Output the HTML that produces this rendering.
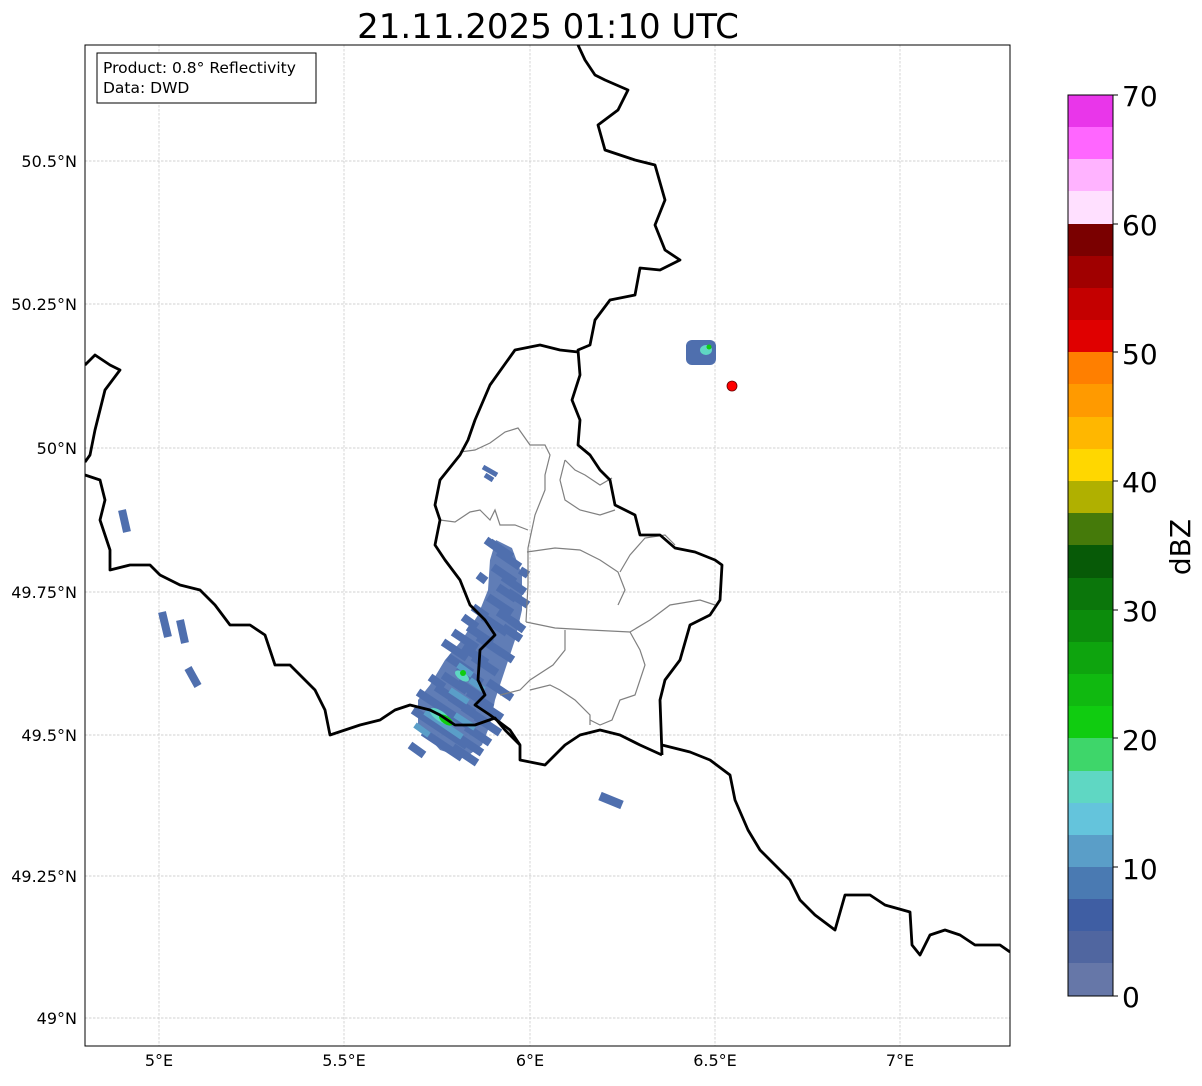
<!DOCTYPE html>
<html><head><meta charset="utf-8"><style>
body{margin:0;background:#fff;width:1202px;height:1081px;overflow:hidden;font-family:"Liberation Sans","DejaVu Sans",sans-serif}
</style></head><body>
<svg width="1202" height="1081" xmlns="http://www.w3.org/2000/svg" font-family="DejaVu Sans, Liberation Sans, sans-serif">
<rect width="1202" height="1081" fill="#fff"/>
<text x="548" y="38" font-size="34" text-anchor="middle" fill="#000">21.11.2025 01:10 UTC</text>
<defs><clipPath id="c"><rect x="85" y="45" width="925" height="1001"/></clipPath></defs>
<g stroke="#c4c4c4" stroke-width="0.7" stroke-dasharray="2.5,1.5">
<line x1="159" y1="45" x2="159" y2="1046"/><line x1="344" y1="45" x2="344" y2="1046"/><line x1="530" y1="45" x2="530" y2="1046"/><line x1="715" y1="45" x2="715" y2="1046"/><line x1="900" y1="45" x2="900" y2="1046"/>
<line x1="85" y1="161" x2="1010" y2="161"/><line x1="85" y1="304" x2="1010" y2="304"/><line x1="85" y1="448" x2="1010" y2="448"/><line x1="85" y1="592" x2="1010" y2="592"/><line x1="85" y1="735" x2="1010" y2="735"/><line x1="85" y1="876" x2="1010" y2="876"/><line x1="85" y1="1018" x2="1010" y2="1018"/>
</g>
<g clip-path="url(#c)">
<!-- radar echo underlay -->
<polygon points="418,725 440,750 465,758 482,745 490,725 495,700 505,670 515,640 522,610 522,575 512,548 496,540 490,560 488,590 478,615 462,640 445,660 430,685 418,700" fill="#4f6fae" opacity="0.9"/>
<g stroke="#4f6fae" stroke-width="8" fill="none">
<path d="M418,692l24,16 M433,702l24,16 M448,712l24,16 M413,710l24,16 M428,720l24,16 M443,730l24,16 M458,737l24,16 M423,732l24,16 M438,742l24,16 M453,747l24,16 M466,727l24,16 M436,687l24,16 M450,697l24,16 M463,707l24,16 M476,717l24,16 M458,682l24,16 M443,675l24,16 M468,692l24,16 M478,702l24,16 M488,682l24,16 M410,745l14,10 M430,677l14,10"/>
<path d="M448,657l24,16 M463,647l24,16 M458,667l24,16 M473,657l24,16 M443,642l24,16 M478,637l24,16 M468,627l24,16 M483,617l24,16 M493,647l20,13 M453,632l24,16 M488,597l24,16 M498,612l20,13 M503,627l18,12 M463,617l14,10 M473,607l14,10"/>
<path d="M490,542l22,15 M498,552l22,15 M493,567l22,15 M503,577l22,15 M508,592l20,13 M498,587l18,12 M486,540l14,10 M510,620l14,10 M478,575l8,6 M520,570l8,5"/>
<path d="M483,467l14,8 M485,475l8,5" stroke-width="5"/>
<path d="M162,612l6,25 M180,620l5,23 M188,668l10,18 M122,510l5,22" stroke-width="8"/>
<path d="M600,796l22,9" stroke-width="9"/>
</g>
<rect x="686" y="340" width="30" height="25" rx="6" fill="#4f6fae"/>
<g stroke="#5a9ec8" stroke-width="6" fill="none">
<path d="M425,712l24,16 M440,722l22,15 M455,715l20,13 M450,690l18,12 M458,665l14,10 M470,680l14,10 M415,725l14,10"/>
</g>
<g fill="#5fd7c3"><ellipse cx="440" cy="716" rx="12" ry="5" transform="rotate(35 440 716)"/><ellipse cx="462" cy="676" rx="8" ry="4" transform="rotate(35 462 676)"/><ellipse cx="706" cy="350" rx="6" ry="5"/></g>
<g fill="#10cc10"><ellipse cx="446" cy="720" rx="8" ry="4" transform="rotate(35 446 720)"/><circle cx="463" cy="673" r="3"/><circle cx="709" cy="347" r="2.5"/></g>
<!-- grey internal borders -->
<g fill="none" stroke="#808080" stroke-width="1.2">
<polyline points="460,452 475,450 490,443 505,432 518,428 530,445 545,445 550,455 545,475 545,490 535,515 528,548 528,585 526,622"/>
<polyline points="440,520 455,522 470,512 480,510 490,520 495,510 500,525 515,525 528,530"/>
<polyline points="527,552 555,548 580,550 600,560 618,572 625,590 618,605"/>
<polyline points="620,572 630,555 645,538 665,535 675,545"/>
<polyline points="526,622 555,628 590,630 630,632 650,620 670,605 700,600 715,605"/>
<polyline points="565,630 565,650 553,665 530,680 520,690 500,695"/>
<polyline points="630,632 640,650 645,665 640,680 635,695 620,700 612,720 600,725 590,720"/>
<polyline points="530,690 550,685 560,690 575,700 590,715 590,725"/>
<polyline points="565,460 560,480 565,500 580,510 600,515 615,510"/>
<polyline points="565,460 575,470 585,475 600,485 612,478"/>
</g>
<!-- black borders -->
<g fill="none" stroke="#000" stroke-width="2.8" stroke-linejoin="round">
<polyline points="578,45 585,60 595,75 605,80 628,90 618,110 598,125 605,150 635,160 655,165 665,200 655,225 665,250 680,260 660,270 640,268 635,295 610,300 595,320 590,345 578,350 580,375 572,400 580,420 578,445 590,455 600,470 610,480 615,505 635,515 640,535 660,535 675,548 695,552 715,560 722,565 720,600 710,615 700,620 690,625 680,660 665,680 660,700 662,755"/>
<polyline points="662,745 690,752 710,760 730,775 735,800 748,830 760,850 790,880 800,900 815,915 835,930 845,895 870,895 885,905 910,912 912,945 920,955 930,935 945,930 960,935 975,945 1000,945 1010,952"/>
<polyline points="578,352 560,350 540,345 515,350 490,385 475,420 468,440 460,455 440,480 435,505 440,520 435,545 445,560 460,580 470,605 485,620 495,635 480,650 478,680 485,695 475,705 490,715 510,730 520,745 520,760 545,765 565,745 580,735 600,730 620,735 640,745 662,755"/>
<polyline points="85,365 95,355 110,365 120,370 105,390 100,410 95,430 90,455 85,462"/>
<polyline points="85,475 100,480 105,500 100,520 110,550 110,570 130,565 150,565 160,575 180,585 200,590 215,605 230,625 250,625 265,635 275,665 290,665 300,675 315,690 325,710 330,735 345,730 360,725 380,720 395,710 410,705 430,710 440,715 455,725 475,725 495,718 505,730 520,745"/>
</g>
</g>
<circle cx="732" cy="386" r="5" fill="#f00" stroke="#600" stroke-width="0.8"/>
<rect x="85" y="45" width="925" height="1001" fill="none" stroke="#000" stroke-width="1"/>
<rect x="97" y="53" width="219" height="50" fill="#fff" stroke="#000" stroke-width="1"/>
<text x="103" y="73" font-size="15.5">Product: 0.8° Reflectivity</text>
<text x="103" y="93" font-size="15.5">Data: DWD</text>
<g font-size="16" text-anchor="end">
<text x="77" y="167">50.5°N</text><text x="77" y="310">50.25°N</text><text x="77" y="454">50°N</text><text x="77" y="598">49.75°N</text><text x="77" y="741">49.5°N</text><text x="77" y="882">49.25°N</text><text x="77" y="1024">49°N</text>
</g>
<g font-size="16" text-anchor="middle">
<text x="159" y="1066">5°E</text><text x="344" y="1066">5.5°E</text><text x="530" y="1066">6°E</text><text x="715" y="1066">6.5°E</text><text x="900" y="1066">7°E</text>
</g>
<g>
<rect x="1068" y="95" width="45" height="33" fill="#e936ea"/>
<rect x="1068" y="127" width="45" height="33" fill="#ff66ff"/>
<rect x="1068" y="159" width="45" height="33" fill="#ffb3ff"/>
<rect x="1068" y="191" width="45" height="33" fill="#ffe0ff"/>
<rect x="1068" y="224" width="45" height="33" fill="#7a0000"/>
<rect x="1068" y="256" width="45" height="33" fill="#a00000"/>
<rect x="1068" y="288" width="45" height="33" fill="#c40000"/>
<rect x="1068" y="320" width="45" height="33" fill="#e00000"/>
<rect x="1068" y="352" width="45" height="33" fill="#ff7f00"/>
<rect x="1068" y="384" width="45" height="33" fill="#ff9a00"/>
<rect x="1068" y="417" width="45" height="33" fill="#ffb700"/>
<rect x="1068" y="449" width="45" height="33" fill="#ffd700"/>
<rect x="1068" y="481" width="45" height="33" fill="#b0b000"/>
<rect x="1068" y="513" width="45" height="33" fill="#457a0a"/>
<rect x="1068" y="545" width="45" height="33" fill="#075a07"/>
<rect x="1068" y="578" width="45" height="33" fill="#0b760b"/>
<rect x="1068" y="610" width="45" height="33" fill="#0c8c0c"/>
<rect x="1068" y="642" width="45" height="33" fill="#0ea40e"/>
<rect x="1068" y="674" width="45" height="33" fill="#10b910"/>
<rect x="1068" y="706" width="45" height="33" fill="#10cc10"/>
<rect x="1068" y="738" width="45" height="33" fill="#3ed66a"/>
<rect x="1068" y="771" width="45" height="33" fill="#5fd7c3"/>
<rect x="1068" y="803" width="45" height="33" fill="#64c4dc"/>
<rect x="1068" y="835" width="45" height="33" fill="#5a9ec8"/>
<rect x="1068" y="867" width="45" height="33" fill="#4a7ab2"/>
<rect x="1068" y="899" width="45" height="33" fill="#3f5ea3"/>
<rect x="1068" y="931" width="45" height="33" fill="#5066a0"/>
<rect x="1068" y="963" width="45" height="33" fill="#6677a8"/>
<rect x="1068" y="95" width="45" height="901" fill="none" stroke="#000" stroke-width="1"/>
</g>
<g font-size="28">
<text x="1122" y="106">70</text><text x="1122" y="235">60</text><text x="1122" y="364">50</text><text x="1122" y="492">40</text><text x="1122" y="621">30</text><text x="1122" y="750">20</text><text x="1122" y="879">10</text><text x="1122" y="1007">0</text>
</g>
<g stroke="#000"><line x1="1113" y1="95" x2="1118" y2="95"/><line x1="1113" y1="224" x2="1118" y2="224"/><line x1="1113" y1="352" x2="1118" y2="352"/><line x1="1113" y1="481" x2="1118" y2="481"/><line x1="1113" y1="610" x2="1118" y2="610"/><line x1="1113" y1="738" x2="1118" y2="738"/><line x1="1113" y1="867" x2="1118" y2="867"/><line x1="1113" y1="996" x2="1118" y2="996"/></g>
<text x="1190" y="547" font-size="28" text-anchor="middle" transform="rotate(-90 1190 547)">dBZ</text>
</svg>
</body></html>
